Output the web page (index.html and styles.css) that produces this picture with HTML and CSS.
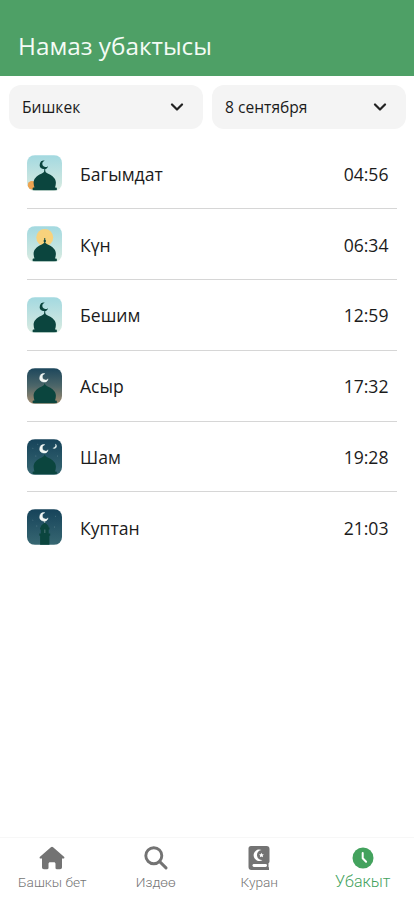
FILE: index.html
```
<!DOCTYPE html>
<html lang="ky">
<head>
<meta charset="utf-8">
<meta name="viewport" content="width=device-width, initial-scale=1">
<title>Намаз убактысы</title>
<link rel="stylesheet" href="styles.css">
</head>
<body>
<svg class="defs" aria-hidden="true">
  <defs>
    <linearGradient id="day" x1="0" y1="0" x2="0" y2="1"><stop offset="0" stop-color="#a3d9e0"/><stop offset="1" stop-color="#d9ebe1"/></linearGradient>
    <linearGradient id="dusk" x1="0" y1="0" x2="0" y2="1"><stop offset="0" stop-color="#1d475c"/><stop offset=".5" stop-color="#4c6669"/><stop offset="1" stop-color="#a18b70"/></linearGradient>
    <linearGradient id="night" x1="0" y1="0" x2="0" y2="1"><stop offset="0" stop-color="#16435a"/><stop offset="1" stop-color="#376772"/></linearGradient>
    <path id="dome" d="M18 15c.3 2 1.500 2.800 3.500 3.700C26.500 20.800 29.300 24 29.300 28c0 1.800-.4 3.200-.9 4.700h1.100c.5 0 .8.400.8.900v1.100c0 .5-.3.900-.8.900h-23c-.5 0-.8-.4-.8-.9v-1.100c0-.5.3-.9.8-.9h1.100C7.100 31.200 6.700 29.800 6.700 28c0-4 2.800-7.200 7.800-9.300 2-.9 3.200-1.700 3.500-3.700z"/>
    <path id="crescent" d="M18.050 5.480A4.300 4.300 0 1 0 21.360 10.780 3.300 3.300 0 1 1 18.050 5.480z"/>
  </defs>
</svg>
<div class="app">
  <header class="header"><h1>Намаз убактысы</h1></header>
  <div class="filters">
    <button class="select"><span>Бишкек</span><svg width="14" height="9" viewBox="0 0 14 9"><path d="M2 1.500l5 5 5-5"/></svg></button>
    <button class="select"><span>8 сентября</span><svg width="14" height="9" viewBox="0 0 14 9"><path d="M2 1.500l5 5 5-5"/></svg></button>
  </div>
  <main class="list">
    <div class="row">
      <svg class="pic" viewBox="0 0 36 36"><path fill="url(#day)" d="M0 0h36v36H0z"/><circle cx="5" cy="30.500" r="4.300" fill="#eda451"/><g fill="#0b453e"><use href="#dome"/><use href="#crescent"/><path d="M17.500 13h1v4h-1z"/></g></svg>
      <span class="name">Багымдат</span><time>04:56</time>
    </div>
    <div class="row">
      <svg class="pic" viewBox="0 0 36 36"><path fill="url(#day)" d="M0 0h36v36H0z"/><circle cx="18" cy="11.300" r="8.600" fill="#f8d27c"/><g fill="#0b453e"><use href="#dome"/><path d="M17.500 12h1v4h-1z"/><circle cx="18" cy="15" r="1.200"/></g></svg>
      <span class="name">Күн</span><time>06:34</time>
    </div>
    <div class="row">
      <svg class="pic" viewBox="0 0 36 36"><path fill="url(#day)" d="M0 0h36v36H0z"/><g fill="#0b453e"><use href="#dome"/><use href="#crescent"/><path d="M17.500 13h1v4h-1z"/></g></svg>
      <span class="name">Бешим</span><time>12:59</time>
    </div>
    <div class="row">
      <svg class="pic" viewBox="0 0 36 36"><path fill="url(#dusk)" d="M0 0h36v36H0z"/><use href="#dome" fill="#0b453e"/><use href="#crescent" fill="#f2f6f4" stroke="#f2f6f4" stroke-width=".5"/></svg>
      <span class="name">Асыр</span><time>17:32</time>
    </div>
    <div class="row">
      <svg class="pic" viewBox="0 0 36 36"><path fill="url(#night)" d="M0 0h36v36H0z"/><use href="#dome" fill="#0b453e"/><use href="#crescent" fill="#f2f6f4" stroke="#f2f6f4" stroke-width=".5"/><path fill="#dce8e8" d="M28.500 4.500a2.600 2.600 0 1 1-2.700 4.300A2.900 2.900 0 0 0 28.500 4.500z"/><g fill="#84a3ab"><circle cx="6" cy="9" r=".4"/><circle cx="9" cy="17" r=".4"/><circle cx="31" cy="17" r=".4"/><circle cx="11" cy="5" r=".4"/></g></svg>
      <span class="name">Шам</span><time>19:28</time>
    </div>
    <div class="row">
      <svg class="pic" viewBox="0 0 36 36"><path fill="url(#night)" d="M0 0h36v36H0z"/><path fill="#0b453e" d="M18 13c.3 2 4 2.500 4 5.500h.8v2H22v4h1.500v2.300h-.8V36h-9.400v-9.200h-.8v-2.300H14v-4h-.8v-2h.8c0-3 3.700-3.500 4-5.500z"/><path fill="#3c6966" d="M17.300 20.500h1.400v3.500h-1.400z"/><path fill="#b8cccc" d="M17.600 11h.8v3h-.8z"/><use href="#crescent" fill="#f2f6f4" stroke="#f2f6f4" stroke-width=".5" transform="translate(0 -2)"/><g fill="#84a3ab"><circle cx="6" cy="11" r=".4"/><circle cx="10" cy="17" r=".4"/><circle cx="28" cy="18" r=".4"/><circle cx="29" cy="7" r=".4"/></g></svg>
      <span class="name">Куптан</span><time>21:03</time>
    </div>
  </main>
  <nav class="tabs">
    <a class="tab"><svg width="26" height="24" viewBox="0 0 26 24"><path fill="#737373" d="M11.900 1.300a1.700 1.700 0 0 1 2.200 0L25 10.700c.8.700.4 1.900-.7 1.900H23v8.700c0 1.200-.8 2-2 2h-3.300c-.7 0-1.200-.5-1.200-1.200v-4.400c0-.9-.7-1.500-1.500-1.500h-4c-.8 0-1.500.6-1.500 1.500v4.400c0 .7-.5 1.200-1.200 1.200H5c-1.200 0-2-.8-2-2v-8.700H1.700c-1.100 0-1.500-1.200-.7-1.900z"/></svg><span>Башкы бет</span></a>
    <a class="tab"><svg width="24" height="24" viewBox="0 0 24 24"><g fill="none" stroke="#737373" stroke-width="2.900" stroke-linecap="round"><circle cx="9.800" cy="9.700" r="8"/><path d="M15.700 15.600l6.300 6.300"/></g></svg><span>Издөө</span></a>
    <a class="tab"><svg width="22" height="24" viewBox="0 0 22 24"><path fill="#737373" d="M3 0h15.500Q21.500 0 21.500 3v12.500q0 1.300-1 1.800v4h.5V24H3.500Q.5 24 .5 21V2.500Q.5 0 3 0z"/><rect x="4.500" y="18" width="14.500" height="3" rx="1.400" fill="#fff"/><path fill="#fff" d="M13.500 4A5.700 5.700 0 1 0 14.500 14 4.700 4.700 0 1 1 13.500 4zM13.400 6.700l.8 1.500 1.700.2-1.200 1.200.3 1.700-1.600-.8-1.500.8.300-1.700-1.200-1.200 1.700-.2z"/></svg><span>Куран</span></a>
    <a class="tab active"><svg width="22" height="22" viewBox="0 0 22 22"><circle cx="11" cy="11" r="10.500" fill="#43a25d"/><path d="M10.700 6v5.300l3.400 3.500" fill="none" stroke="#fff" stroke-width="2" stroke-linecap="round" stroke-linejoin="round"/></svg><span>Убакыт</span></a>
  </nav>
</div>
</body>
</html>
```
FILE: styles.css
```
* { box-sizing: border-box; }
body { margin: 0; background: #fff; color: #1b1b1b; font-family: "Open Sans", "Noto Sans", sans-serif; }
.defs { position: absolute; width: 0; height: 0; }
.app { height: 900px; display: flex; flex-direction: column; }
.header { height: 76px; padding: 29px 18px 0; background: #4ea066; color: #f4fbf5; }
h1 { margin: 0; font: 400 24.300px/34px "Open Sans", sans-serif; white-space: nowrap; }
.filters { display: grid; grid-template-columns: 194px 194px; gap: 9px; padding: 9px 9px 0; }
.select { height: 44px; display: flex; align-items: center; justify-content: space-between; padding: 0 19px 0 13px; border: 0; border-radius: 12px; background: #f4f4f4; color: #1b1b1b; font: 400 15.600px/20px "Open Sans", sans-serif; }
.select svg { fill: none; stroke: #222; stroke-width: 2.2; stroke-linecap: round; stroke-linejoin: round; }
.list { padding: 9.500px 17px 0 26.500px; }
.row { height: 70.800px; display: flex; align-items: center; padding-right: 8.500px; border-bottom: 1px solid #d6d6d6; font-size: 17.600px; line-height: 26px; }
.row span, .row time { padding-top: 1px; }
.row:last-child { border-bottom-color: transparent; }
.pic { width: 35.500px; height: 36px; border-radius: 8px; overflow: hidden; margin-right: 18px; }
.name { flex: 1; }
.tabs { margin-top: auto; height: 63px; display: grid; grid-template-columns: repeat(4, 1fr); border-top: 1px solid #f7f7f7; }
.tab { display: flex; flex-direction: column; align-items: center; padding: 8px 0 0 1px; color: #757575; font: 300 13.700px/18px Roboto, sans-serif; }
.tab svg { height: 24px; margin-bottom: 3px; }
.active { color: #43a25d; font-size: 16px; }
```
